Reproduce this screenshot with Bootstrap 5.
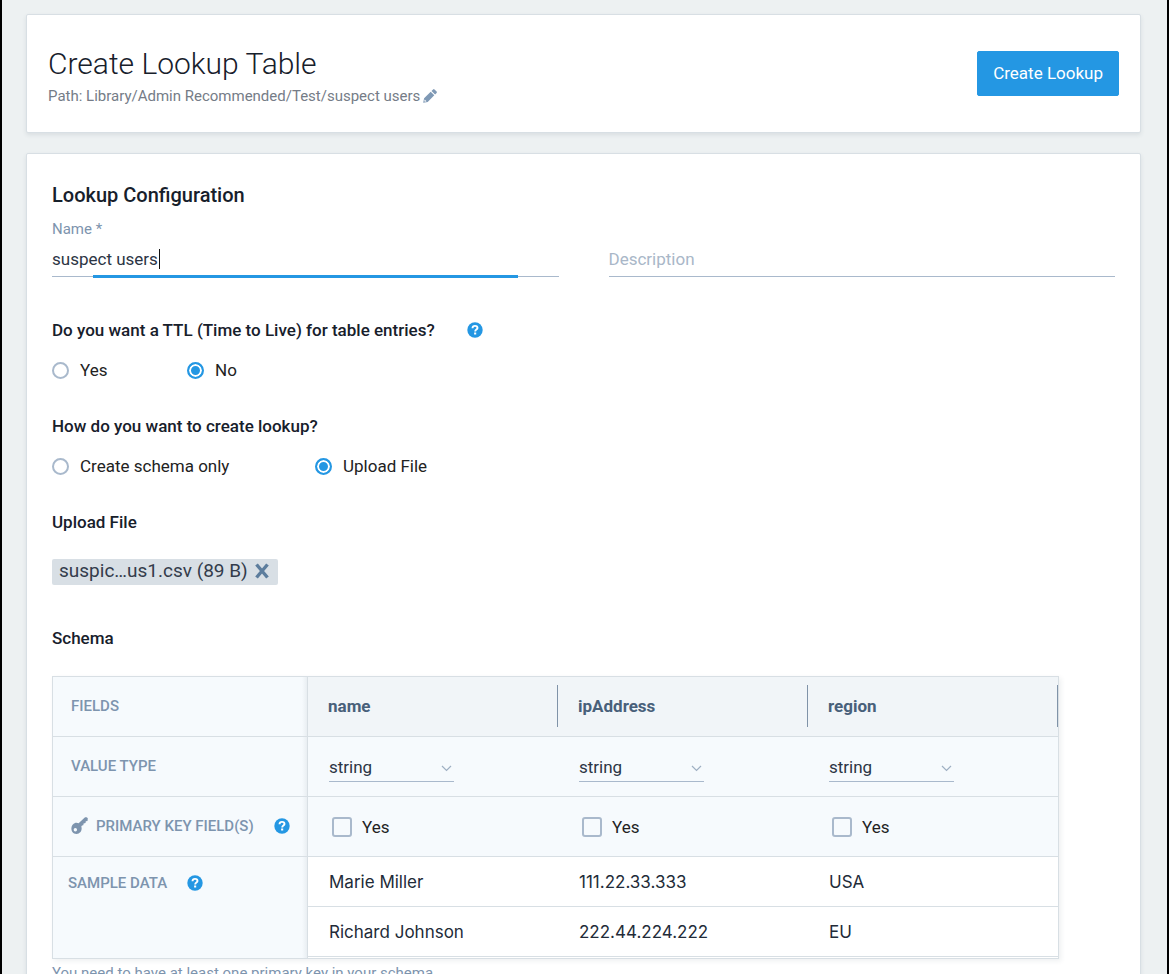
<!DOCTYPE html>
<html lang="en">
<head>
<meta charset="utf-8">
<meta name="viewport" content="width=device-width, initial-scale=1">
<title>Create Lookup Table</title>
<link rel="stylesheet" href="https://cdn.jsdelivr.net/npm/bootstrap@5.3.0/dist/css/bootstrap.min.css">
<style>
  :root { --accent: #2497e3; --ink: #17202b; --line: #d8dfe4; --muted: #7d94ae; --rule: #a9b9cc; }
  body { font-family: Roboto, sans-serif; font-size: 17px; line-height: 24px; color: #222b38; background: #edf1f2; }
  .app-frame { border: solid #000; border-width: 0 2px; padding: 14px 26px 0 24px; }
  .panel { background: #fff; border: 1px solid var(--line); border-radius: 2px; box-shadow: 0 2px 4px rgba(40, 60, 80, .1); }
  .panel-head { padding: 24px 21px; margin-bottom: 20px; min-height: 119px; }
  .panel-body { padding: 25px; min-height: 860px; }
  .page-title { font-size: 30px; line-height: 44px; font-weight: 300; color: var(--ink); }
  .path-line { font-size: 15px; line-height: 20px; color: #757c87; gap: 3px; }
  .btn-create { --bs-btn-color: #fff; --bs-btn-bg: #2497e3; --bs-btn-border-color: #2497e3; --bs-btn-hover-color: #fff; --bs-btn-hover-bg: #1b84ca; --bs-btn-hover-border-color: #1b84ca; --bs-btn-font-size: 17px; --bs-btn-padding-x: 15px; --bs-btn-padding-y: 10px; --bs-btn-border-radius: 2px; line-height: 23px; }
  .section-title { font-size: 20px; line-height: 32px; font-weight: 500; color: var(--ink); }
  .question { font-size: 17px; line-height: 24px; font-weight: 500; color: var(--ink); gap: 32px; }
  .field-label { font-size: 15px; line-height: 20px; color: var(--muted); }
  .fields { display: grid; grid-template-columns: 1fr 1fr; column-gap: 50px; margin-bottom: 41px; }
  .line-input { padding: 2px 0 0; height: 38px; font-size: 17px; border: 0; border-bottom: 1px solid var(--rule); border-radius: 0; background: none; color: #2c3544; }
  .line-input:focus { box-shadow: none; background: none; border-color: var(--rule); }
  .line-input::placeholder { color: #a9b7c8; }
  .field-active::after { content: ""; position: absolute; left: 8%; right: 8%; bottom: -1px; height: 3px; background: var(--accent); }
  .caret-bar { left: 107px; top: 10px; width: 1px; height: 20px; background: #111; }
  .choice { color: #222; gap: 11px; }
  .choice .form-check-input { width: 17px; height: 17px; margin: 0; border: 2px solid var(--rule); background-color: #fff; }
  .choice .form-check-input:checked { border-color: var(--accent); background: var(--accent); box-shadow: inset 0 0 0 2px #fff; }
  .choice .form-check-input[type=checkbox] { width: 20px; height: 20px; border-radius: 3px; background-color: transparent; }
  .choice-key { padding-left: 3px; gap: 10px; }
  .choice-first { width: 135px; }
  .choice-wide { width: 263px; }
  .file-row { margin: 25px 0 41px; }
  .file-chip { background: #d8dfe5; border-radius: 2px; padding: 0 8px 2px 7px; gap: 6px; font-size: 19px; line-height: 24px; color: #333c4b; }
  .schema { max-width: 1007px; margin-top: 26px; table-layout: fixed; border-collapse: separate; border-spacing: 0; border: solid var(--line); border-width: 1px 1px 0 1px; box-shadow: 2px 2px 5px rgba(40, 60, 80, .08); }
  .schema th, .schema td { padding: 0 0 0 21px; height: 60px; vertical-align: middle; border-bottom: 1px solid var(--line); background: #f6fafd; }
  .schema .col-label { width: 255px; }
  .schema tbody th, .schema .corner { padding: 0 0 2px 18px; font-size: 15px; font-weight: 500; color: var(--muted); border-right: 1px solid var(--line); background: linear-gradient(to left, #e9eef2, #f6fafd 5px); }
  .schema .col-name { padding: 0 0 2px; background: #f1f5f8; color: #48607a; font-size: 17px; font-weight: 700; }
  .col-name div { height: 42px; padding-left: 20px; border-right: 1px solid #8093a8; }
  .schema .sample td { height: 50px; background: #fff; font-family: Inter, sans-serif; font-size: 17px; color: #222b38; }
  .schema .sample .sample-label { vertical-align: top; padding: 14px 0 0 15px; }
  .schema .tail td { height: 2px; padding: 0; line-height: 0; background: #fff; }
  .row-help { gap: 20px; }
  .type-select { width: 125px; height: 30px; padding: 2px 0 0; font-size: 17px; line-height: 24px; border: 0; border-bottom: 1px solid var(--rule); border-radius: 0; color: #2c3544; background: url("data:image/svg+xml,%3Csvg xmlns='http://www.w3.org/2000/svg' width='11' height='7'%3E%3Cpath d='M1 1l4.500 4.500L10 1' fill='none' stroke='%239fb0c3' stroke-width='1.200'/%3E%3C/svg%3E") no-repeat right 2px top 13px; }
  .hint { font-size: 15px; line-height: 20px; color: var(--muted); }
  svg { display: block; flex: none; }
</style>
<script src="https://cdn.jsdelivr.net/npm/bootstrap@5.3.0/dist/js/bootstrap.bundle.min.js"></script>
</head>
<body>
<svg width="0" height="0" class="position-absolute" aria-hidden="true">
  <symbol id="help" viewBox="0 0 16 16">
    <circle cx="8" cy="8" r="7.700" fill="#2497e3"/>
    <path d="M5.500 6.200C5.600 4.600 6.600 3.900 8 3.900s2.500.8 2.500 2.100c0 1.600-2.300 1.600-2.300 3.400" fill="none" stroke="#fff" stroke-width="1.900"/>
    <rect x="7.100" y="10.500" width="2.100" height="2" fill="#fff"/>
  </symbol>
</svg>
<div class="app-frame vh-100 overflow-hidden">
  <header class="panel panel-head d-flex justify-content-between align-items-center">
    <div>
      <h1 class="page-title m-0">Create Lookup Table</h1>
      <div class="path-line d-flex align-items-center">
        <span>Path: Library/Admin Recommended/Test/suspect users</span>
        <a href="#" aria-label="Edit path"><svg width="14" height="14" viewBox="0 0 14 14" fill="#7f99b5"><path d="M.2 13.800l.9-4.500L7.700 2.700l3.600 3.600-6.600 6.600zM8.500 1.900L10.100.4q.7-.6 1.400 0l2.100 2.100q.6.700 0 1.400l-1.500 1.600z"/><path d="M1.700 10.500l1.800 1.800-1.500.4-.7-.7z" fill="#fff"/></svg></a>
      </div>
    </div>
    <button type="button" class="btn btn-create">Create Lookup</button>
  </header>

  <main class="panel panel-body">
    <h2 class="section-title m-0">Lookup Configuration</h2>
    <div class="fields align-items-end">
      <div>
        <label for="name" class="field-label d-block pt-2">Name *</label>
        <div class="position-relative field-active">
          <input id="name" type="text" class="form-control line-input" value="suspect users">
          <span class="caret-bar position-absolute"></span>
        </div>
      </div>
      <input type="text" class="form-control line-input" placeholder="Description" aria-label="Description">
    </div>

    <h3 class="question d-flex align-items-center m-0">Do you want a TTL (Time to Live) for table entries?
      <svg width="16" height="16"><use href="#help"/></svg></h3>
    <div class="d-flex mt-3">
      <div class="choice choice-first d-flex align-items-center"><input class="form-check-input" type="radio" name="ttl" id="ttl-yes"><label for="ttl-yes">Yes</label></div>
      <div class="choice d-flex align-items-center"><input class="form-check-input" type="radio" name="ttl" id="ttl-no" checked><label for="ttl-no">No</label></div>
    </div>

    <h3 class="question m-0 mt-4 pt-2">How do you want to create lookup?</h3>
    <div class="d-flex mt-3">
      <div class="choice choice-wide d-flex align-items-center"><input class="form-check-input" type="radio" name="how" id="how-schema"><label for="how-schema">Create schema only</label></div>
      <div class="choice d-flex align-items-center"><input class="form-check-input" type="radio" name="how" id="how-file" checked><label for="how-file">Upload File</label></div>
    </div>

    <h3 class="question m-0 mt-4 pt-2">Upload File</h3>
    <div class="d-flex file-row">
      <div class="file-chip d-flex align-items-center">
        <span>suspic…us1.csv (89 B)</span>
        <button type="button" class="btn p-0 border-0" aria-label="Remove file"><svg width="16" height="16" viewBox="0 0 16 16" stroke="#5c7d9d" stroke-width="3.400"><path d="M2.500 1.500l11 13M13.500 1.500l-11 13"/></svg></button>
      </div>
    </div>

    <h3 class="question m-0">Schema</h3>
    <table class="schema w-100">
      <thead>
        <tr>
          <th class="corner col-label" scope="col">FIELDS</th>
          <th class="col-name" scope="col"><div class="d-flex align-items-center">name</div></th>
          <th class="col-name" scope="col"><div class="d-flex align-items-center">ipAddress</div></th>
          <th class="col-name" scope="col"><div class="d-flex align-items-center">region</div></th>
        </tr>
      </thead>
      <tbody>
        <tr>
          <th scope="row">VALUE TYPE</th>
          <td><select class="form-select type-select" aria-label="Type of name"><option>string</option></select></td>
          <td><select class="form-select type-select" aria-label="Type of ipAddress"><option>string</option></select></td>
          <td><select class="form-select type-select" aria-label="Type of region"><option>string</option></select></td>
        </tr>
        <tr>
          <th scope="row"><div class="d-flex align-items-center row-help">
            <span class="d-flex align-items-center gap-2"><svg width="17" height="17" viewBox="0 0 17 17" fill="#7d94ae"><path fill-rule="evenodd" d="M4.500 5.700c1.200-.2 2.300 0 3.100.6L13.500.8c.7-.6 1.600-.6 2.500-.3l.8.800-.3 2.600-1.700.3-.3 1.900-1.900.3-.3 1.900-1.300.2-.7.900c1.200 3.600-.8 7.300-4.800 7.500C-.8 17-1.500 7.600 4.500 5.700zM4.300 11a1.700 1.700 0 1 0 .1 3.400A1.700 1.700 0 0 0 4.300 11z"/></svg>
            PRIMARY KEY FIELD(S)</span>
            <svg width="16" height="16"><use href="#help"/></svg></div></th>
          <td><div class="choice choice-key d-flex align-items-center"><input class="form-check-input" type="checkbox" id="pk-name"><label for="pk-name">Yes</label></div></td>
          <td><div class="choice choice-key d-flex align-items-center"><input class="form-check-input" type="checkbox" id="pk-ip"><label for="pk-ip">Yes</label></div></td>
          <td><div class="choice choice-key d-flex align-items-center"><input class="form-check-input" type="checkbox" id="pk-region"><label for="pk-region">Yes</label></div></td>
        </tr>
        <tr class="sample">
          <th scope="row" rowspan="3" class="sample-label"><div class="d-flex align-items-center row-help">SAMPLE DATA
            <svg width="16" height="16"><use href="#help"/></svg></div></th>
          <td>Marie Miller</td><td>111.22.33.333</td><td>USA</td>
        </tr>
        <tr class="sample"><td>Richard Johnson</td><td>222.44.224.222</td><td>EU</td></tr>
        <tr class="tail"><td colspan="3"></td></tr>
      </tbody>
    </table>
    <p class="hint m-0 mt-1">You need to have at least one primary key in your schema.</p>
  </main>
</div>
</body>
</html>
